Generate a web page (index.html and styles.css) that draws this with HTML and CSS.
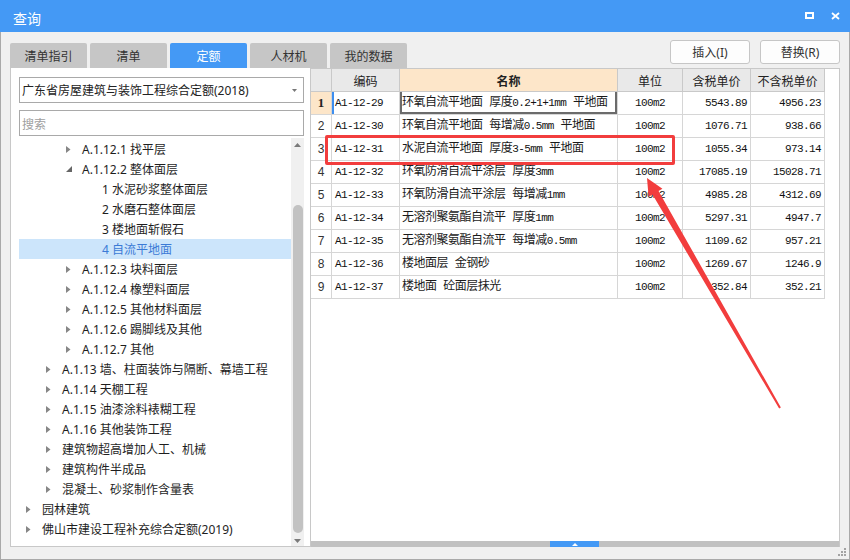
FILE: index.html
```html
<!DOCTYPE html>
<html lang="zh-CN">
<head>
<meta charset="utf-8">
<title>查询</title>
<link rel="stylesheet" href="styles.css">
</head>
<body>
<div class="window">
  <div class="titlebar">
    <span class="title">查询</span>
    <div class="ctrls">
      <svg class="ic" width="9" height="7" viewBox="0 0 9 7"><rect x="1" y="1" width="7" height="5" fill="none" stroke="#fff" stroke-width="2"/></svg>
      <svg class="ic" width="9" height="8" viewBox="0 0 9 8"><path d="M1 1 L8 7 M8 1 L1 7" stroke="#fff" stroke-width="1.8"/></svg>
    </div>
  </div>
  <div class="body">
    <div class="toolbar">
      <div class="tabs">
        <div class="tab">清单指引</div>
        <div class="tab">清单</div>
        <div class="tab active">定额</div>
        <div class="tab">人材机</div>
        <div class="tab">我的数据</div>
      </div>
      <div class="btns">
        <div class="btn">插入(I)</div>
        <div class="btn">替换(R)</div>
      </div>
    </div>
    <div class="content">
      <div class="left">
        <div class="select"><span>广东省房屋建筑与装饰工程综合定额(2018)</span><svg width="5" height="3" viewBox="0 0 5 3"><path d="M0 0 H5 L2.5 3 Z" fill="#777"/></svg></div>
        <div class="search">搜索</div>
        <div class="treewrap">
          <div class="tree">
            <div class="node l3"><span class="tw"><svg width="5" height="7" viewBox="0 0 5 7"><path d="M0 0 L4.5 3.5 L0 7 Z" fill="#868686"/></svg></span>A.1.12.1 找平层</div>
            <div class="node l3"><span class="tw"><svg width="6" height="6" viewBox="0 0 6 6"><path d="M6 0 V6 H0 Z" fill="#666"/></svg></span>A.1.12.2 整体面层</div>
            <div class="node l4"><span class="tw"></span>1 水泥砂浆整体面层</div>
            <div class="node l4"><span class="tw"></span>2 水磨石整体面层</div>
            <div class="node l4"><span class="tw"></span>3 楼地面斩假石</div>
            <div class="node l4 sel"><span class="tw"></span>4 自流平地面</div>
            <div class="node l3"><span class="tw"><svg width="5" height="7" viewBox="0 0 5 7"><path d="M0 0 L4.5 3.5 L0 7 Z" fill="#868686"/></svg></span>A.1.12.3 块料面层</div>
            <div class="node l3"><span class="tw"><svg width="5" height="7" viewBox="0 0 5 7"><path d="M0 0 L4.5 3.5 L0 7 Z" fill="#868686"/></svg></span>A.1.12.4 橡塑料面层</div>
            <div class="node l3"><span class="tw"><svg width="5" height="7" viewBox="0 0 5 7"><path d="M0 0 L4.5 3.5 L0 7 Z" fill="#868686"/></svg></span>A.1.12.5 其他材料面层</div>
            <div class="node l3"><span class="tw"><svg width="5" height="7" viewBox="0 0 5 7"><path d="M0 0 L4.5 3.5 L0 7 Z" fill="#868686"/></svg></span>A.1.12.6 踢脚线及其他</div>
            <div class="node l3"><span class="tw"><svg width="5" height="7" viewBox="0 0 5 7"><path d="M0 0 L4.5 3.5 L0 7 Z" fill="#868686"/></svg></span>A.1.12.7 其他</div>
            <div class="node l2"><span class="tw"><svg width="5" height="7" viewBox="0 0 5 7"><path d="M0 0 L4.5 3.5 L0 7 Z" fill="#868686"/></svg></span>A.1.13 墙、柱面装饰与隔断、幕墙工程</div>
            <div class="node l2"><span class="tw"><svg width="5" height="7" viewBox="0 0 5 7"><path d="M0 0 L4.5 3.5 L0 7 Z" fill="#868686"/></svg></span>A.1.14 天棚工程</div>
            <div class="node l2"><span class="tw"><svg width="5" height="7" viewBox="0 0 5 7"><path d="M0 0 L4.5 3.5 L0 7 Z" fill="#868686"/></svg></span>A.1.15 油漆涂料裱糊工程</div>
            <div class="node l2"><span class="tw"><svg width="5" height="7" viewBox="0 0 5 7"><path d="M0 0 L4.5 3.5 L0 7 Z" fill="#868686"/></svg></span>A.1.16 其他装饰工程</div>
            <div class="node l2"><span class="tw"><svg width="5" height="7" viewBox="0 0 5 7"><path d="M0 0 L4.5 3.5 L0 7 Z" fill="#868686"/></svg></span>建筑物超高增加人工、机械</div>
            <div class="node l2"><span class="tw"><svg width="5" height="7" viewBox="0 0 5 7"><path d="M0 0 L4.5 3.5 L0 7 Z" fill="#868686"/></svg></span>建筑构件半成品</div>
            <div class="node l2"><span class="tw"><svg width="5" height="7" viewBox="0 0 5 7"><path d="M0 0 L4.5 3.5 L0 7 Z" fill="#868686"/></svg></span>混凝土、砂浆制作含量表</div>
            <div class="node l1"><span class="tw"><svg width="5" height="7" viewBox="0 0 5 7"><path d="M0 0 L4.5 3.5 L0 7 Z" fill="#868686"/></svg></span>园林建筑</div>
            <div class="node l1"><span class="tw"><svg width="5" height="7" viewBox="0 0 5 7"><path d="M0 0 L4.5 3.5 L0 7 Z" fill="#868686"/></svg></span>佛山市建设工程补充综合定额(2019)</div>
          </div>
          <div class="vscroll">
            <div class="sarrow up"><svg width="7" height="4" viewBox="0 0 7 4"><path d="M0 4 L3.5 0 L7 4 Z" fill="#7a7a7a"/></svg></div>
            <div class="thumb"></div>
            <div class="sarrow down"><svg width="7" height="4" viewBox="0 0 7 4"><path d="M0 0 L7 0 L3.5 4 Z" fill="#7a7a7a"/></svg></div>
          </div>
        </div>
      </div>
      <div class="right">
        <div class="grid">
          <div class="row head">
            <div class="c n"></div><div class="c">编码</div><div class="c hl b">名称</div><div class="c">单位</div><div class="c">含税单价</div><div class="c">不含税单价</div>
          </div>
          <div class="row">
            <div class="c n cur-n">1</div><div class="c code cur">A1-12-29</div><div class="c name edit">环氧自流平地面 厚度<span class="m">0.2+1+1mm</span> 平地面</div><div class="c unit">100m2</div><div class="c num">5543.89</div><div class="c num">4956.23</div>
          </div>
          <div class="row">
            <div class="c n">2</div><div class="c code">A1-12-30</div><div class="c name">环氧自流平地面 每增减<span class="m">0.5mm</span> 平地面</div><div class="c unit">100m2</div><div class="c num">1076.71</div><div class="c num">938.66</div>
          </div>
          <div class="row">
            <div class="c n">3</div><div class="c code">A1-12-31</div><div class="c name">水泥自流平地面 厚度<span class="m">3-5mm</span> 平地面</div><div class="c unit">100m2</div><div class="c num">1055.34</div><div class="c num">973.14</div>
          </div>
          <div class="row">
            <div class="c n">4</div><div class="c code">A1-12-32</div><div class="c name">环氧防滑自流平涂层 厚度<span class="m">3mm</span></div><div class="c unit">100m2</div><div class="c num">17085.19</div><div class="c num">15028.71</div>
          </div>
          <div class="row">
            <div class="c n">5</div><div class="c code">A1-12-33</div><div class="c name">环氧防滑自流平涂层 每增减<span class="m">1mm</span></div><div class="c unit">100m2</div><div class="c num">4985.28</div><div class="c num">4312.69</div>
          </div>
          <div class="row">
            <div class="c n">6</div><div class="c code">A1-12-34</div><div class="c name">无溶剂聚氨酯自流平 厚度<span class="m">1mm</span></div><div class="c unit">100m2</div><div class="c num">5297.31</div><div class="c num">4947.7</div>
          </div>
          <div class="row">
            <div class="c n">7</div><div class="c code">A1-12-35</div><div class="c name">无溶剂聚氨酯自流平 每增减<span class="m">0.5mm</span></div><div class="c unit">100m2</div><div class="c num">1109.62</div><div class="c num">957.21</div>
          </div>
          <div class="row">
            <div class="c n">8</div><div class="c code">A1-12-36</div><div class="c name">楼地面层 金钢砂</div><div class="c unit">100m2</div><div class="c num">1269.67</div><div class="c num">1246.9</div>
          </div>
          <div class="row">
            <div class="c n">9</div><div class="c code">A1-12-37</div><div class="c name">楼地面 砼面层抹光</div><div class="c unit">100m2</div><div class="c num">352.84</div><div class="c num">352.21</div>
          </div>
        </div>
        <div class="hbar"><div class="handle"><svg width="6" height="3" viewBox="0 0 6 3"><path d="M0 3 L3 0 L6 3 Z" fill="#fff"/></svg></div></div>
      </div>
    </div>
    <div class="statusbar">
      <svg class="grip" width="9" height="9" viewBox="0 0 9 9" fill="#a3a3a3"><rect x="6" y="0" width="2" height="2"/><rect x="3" y="3" width="2" height="2"/><rect x="6" y="3" width="2" height="2"/><rect x="0" y="6" width="2" height="2"/><rect x="3" y="6" width="2" height="2"/><rect x="6" y="6" width="2" height="2"/></svg>
    </div>
  </div>
  <div class="redbox"></div>
  <svg class="arrow" width="850" height="560" viewBox="0 0 850 560"><polygon points="647,178 662.43,188.72 658.54,190.97 780.87,407.5 779.13,408.5 652.48,194.47 648.59,196.72" fill="#f23d3d"/></svg>
</div>
</body>
</html>
```

FILE: styles.css
```css
* { box-sizing: border-box; }
html, body { margin: 0; padding: 0; }
body {
  background: #f0f0f0;
  font-family: "Noto Sans", "Noto Sans CJK SC", sans-serif;
  color: #222;
}
.window {
  position: relative;
  width: 850px;
  height: 560px;
  overflow: hidden;
}
.titlebar {
  height: 32px;
  background: #4499f5;
  color: #fff;
  display: flex;
  align-items: center;
  justify-content: space-between;
  padding: 0 10px 0 13px;
}
.title {
  font-family: "Noto Sans CJK SC", sans-serif;
  font-size: 14px;
  margin-top: 3px;
}
.ctrls { display: flex; align-items: center; gap: 17px; margin-top: -1px; }
.ic { display: block; }

.body {
  height: 528px;
  border-left: 1px solid #a9a9a9;
  border-right: 1px solid #a9a9a9;
  border-bottom: 1px solid #a9a9a9;
  padding: 0 9px;
  display: flex;
  flex-direction: column;
}
.toolbar {
  height: 36px;
  display: flex;
  justify-content: space-between;
}
.tabs { display: flex; gap: 3px; align-self: flex-end; }
.tab {
  width: 77px;
  height: 25px;
  background: #c6c6c6;
  color: #333;
  font-family: "Noto Sans CJK SC", sans-serif;
  font-size: 12px;
  display: flex;
  align-items: center;
  justify-content: center;
  border-radius: 2px 2px 0 0;
}
.tab.active { background: #4499f5; color: #fff; }
.btns { display: flex; gap: 10px; margin-top: 8px; align-self: flex-start; }
.btn {
  width: 80px;
  height: 24px;
  border: 1px solid #c6c6c6;
  border-radius: 3px;
  background: #fdfdfd;
  font-family: "Noto Sans", "Noto Sans CJK SC", sans-serif;
  font-size: 12px;
  color: #333;
  display: flex;
  align-items: center;
  justify-content: center;
}

.content { height: 479px; display: flex; }
.left {
  width: 301px;
  background: #fff;
  border: 1px solid #c8c8c8;
  border-top: none;
  padding: 9px 6px 0 8px;
  display: flex;
  flex-direction: column;
}
.select {
  height: 26px;
  border: 1px solid #a9a9a9;
  padding: 0 6px 0 2px;
  display: flex;
  align-items: center;
  justify-content: space-between;
  font-size: 12px;
  color: #222;
}
.select svg { display: block; }
.search {
  margin-top: 7px;
  height: 26px;
  border: 1px solid #a9a9a9;
  padding-left: 2px;
  display: flex;
  align-items: center;
  font-family: "Noto Sans CJK SC", sans-serif;
  font-size: 12px;
  color: #a0a0a0;
}
.treewrap { margin-top: 2px; flex: 1; min-height: 0; display: flex; }
.tree { flex: 1; overflow: hidden; padding-top: 1px; }
.node {
  height: 20px;
  display: flex;
  align-items: center;
  font-size: 12px;
  color: #1e1e1e;
  white-space: nowrap;
}
.node.l1 { padding-left: 7px; }
.node.l2 { padding-left: 27px; }
.node.l3 { padding-left: 47px; }
.node.l4 { padding-left: 67px; }
.node.sel { background: #cce5fb; color: #3b7ad6; }
.tw { width: 16px; height: 20px; display: inline-flex; align-items: center; flex: none; }
.tw svg { display: block; }

.vscroll {
  width: 13px;
  background: #f0f0f0;
  display: flex;
  flex-direction: column;
  align-items: center;
}
.sarrow { height: 14px; width: 13px; display: flex; align-items: center; justify-content: center; }
.sarrow svg { display: block; }
.sarrow.down { margin-top: auto; height: 12px; align-items: flex-end; padding-bottom: 3px; }
.thumb {
  margin-top: 53px;
  width: 10px;
  height: 328px;
  border-radius: 5px;
  background: #c2c2c2;
}

.right {
  width: 529px;
  background: #fff;
  border-top: 1px solid #c8c8c8;
  border-right: 1px solid #c8c8c8;
  display: flex;
  flex-direction: column;
}
.grid { flex: 1; }
.row {
  display: grid;
  grid-template-columns: 21px 68px 218px 65px 68px 74px;
  height: 23px;
}
.c {
  border-right: 1px solid #d6d6d6;
  border-bottom: 1px solid #d6d6d6;
  display: flex;
  align-items: center;
  overflow: hidden;
  white-space: nowrap;
  font-family: "Noto Sans CJK SC", sans-serif;
  font-size: 12px;
  color: #1a1a1a;
}
.head .c {
  background: #e9e9e9;
  border-color: #c9c9c9;
  justify-content: center;
  color: #222;
}
.head .c.hl { background: #fde6c9; }
.head .c.b { font-weight: 700; }
.c.n {
  justify-content: center;
  font-family: "Liberation Sans", sans-serif;
  font-size: 12px;
  color: #333;
}
.c.n.cur-n {
  background: #fde6c9;
  font-family: "Liberation Serif", serif;
  font-weight: 700;
  font-size: 13px;
  color: #222;
}
.c.code, .c.unit, .c.num, .m {
  font-family: "Liberation Mono", monospace;
  font-size: 11px;
  letter-spacing: -0.6px;
  color: #111;
}
.c.code { padding-left: 3px; }
.c.cur { box-shadow: inset 2px 0 0 #3d8ef0; }
.c.name {
  display: block;
  line-height: 22px;
  padding-left: 2px;
  font-family: "Liberation Mono", "Noto Sans CJK SC", monospace;
  font-size: 12px;
  letter-spacing: -0.5px;
}
.c.name .m { letter-spacing: -0.6px; }
.c.edit { box-shadow: inset 2px 0 0 #6b6b6b, inset -2px 0 0 #6b6b6b, inset 0 -2px 0 #6b6b6b; }
.c.unit { justify-content: center; }
.c.num { justify-content: flex-end; padding-right: 3px; }

.hbar { height: 6px; background: #c1c1c1; display: flex; }
.handle {
  margin-left: 239px;
  width: 49px;
  background: #4499f5;
  display: flex;
  align-items: center;
  justify-content: center;
}
.handle svg { display: block; }

.statusbar {
  flex: 1;
  display: flex;
  justify-content: flex-end;
  align-items: flex-start;
  margin-right: -9px;
}
.grip { display: block; margin-right: 2px; margin-top: 1px; }

.redbox {
  position: absolute;
  left: 325px;
  top: 135px;
  width: 350px;
  height: 30px;
  border: 3px solid #f23d3d;
  border-radius: 2px;
}
.arrow {
  position: absolute;
  left: 0;
  top: 0;
  pointer-events: none;
}
```
